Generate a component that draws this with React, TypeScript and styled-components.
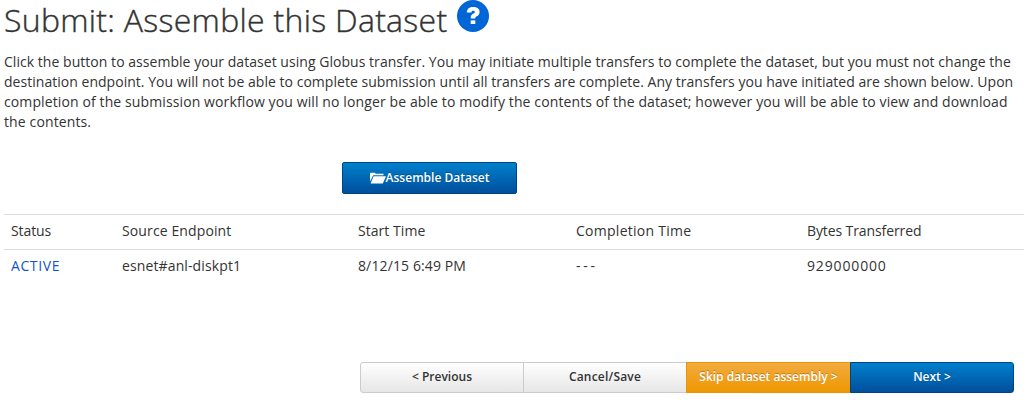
import React from 'react';
import styled, { createGlobalStyle, css } from 'styled-components';

const Global = createGlobalStyle`
  body {
    margin: 0;
    background: #fff;
    color: #333;
    font-family: "Open Sans", "Noto Sans", sans-serif;
    font-size: 14px;
    line-height: 20px;
  }
`;

const Page = styled.main`
  box-sizing: border-box;
  width: 1024px;
  height: 410px;
  padding-left: 4px;
  overflow: hidden;
`;

const Header = styled.header`
  display: flex;
  height: 52px;
`;

const Title = styled.h1`
  margin: 0;
  width: 453px;
  font-size: 32px;
  font-weight: 300;
  line-height: 40px;
  letter-spacing: 0.29px;
  -webkit-text-stroke: 0.4px #333;
  white-space: nowrap;
`;

const HelpIcon = styled.svg`
  width: 32px;
  height: 32px;
`;

const Intro = styled.p`
  margin: 0;
  white-space: nowrap;
`;

const Line = styled.span<{ $spacing: number }>`
  display: block;
  letter-spacing: ${(p) => p.$spacing}px;
`;

const Action = styled.div`
  display: flex;
  padding: 30px 0 20px 338px;
`;

const Button = styled.button<{ $kind: 'primary' | 'warning' | 'plain'; $spacing?: number }>`
  box-sizing: border-box;
  display: flex;
  align-items: center;
  justify-content: center;
  width: 164px;
  height: 31px;
  margin: 0;
  padding: 0 0 1px;
  border: 1px solid #ccc;
  font: 600 12px/20px "Open Sans", "Noto Sans", sans-serif;
  letter-spacing: ${(p) => p.$spacing ?? 0}px;
  white-space: nowrap;
  ${(p) =>
    p.$kind === 'primary' &&
    css`
      color: #fff;
      border-color: #004480;
      background: linear-gradient(#0080cc, #004f9c);
      text-shadow: 0 -1px 0 rgba(0, 0, 0, 0.25);
    `}
  ${(p) =>
    p.$kind === 'warning' &&
    css`
      color: #fff;
      border-color: #eb9500;
      background: linear-gradient(#f3ab41, #ee9700);
      text-shadow: 0 -1px 0 rgba(0, 0, 0, 0.25);
    `}
  ${(p) =>
    p.$kind === 'plain' &&
    css`
      color: #333;
      background: linear-gradient(#fff, #e6e6e6);
    `}
`;

const AssembleButton = styled(Button)`
  width: 175px;
  height: 32px;
  border-radius: 2px;
`;

const FolderIcon = styled.svg`
  width: 16px;
  height: 14px;
`;

const Table = styled.table`
  width: 1020px;
  border-collapse: collapse;
  table-layout: fixed;
`;

const Cell = styled.td<{ $width?: number; $spacing?: number }>`
  box-sizing: border-box;
  width: ${(p) => (p.$width ? `${p.$width}px` : 'auto')};
  height: 35px;
  padding: 0 0 2px 7px;
  border-top: 1px solid #ddd;
  letter-spacing: ${(p) => p.$spacing ?? 0}px;
  vertical-align: middle;
  white-space: nowrap;
`;

const Status = styled.a`
  color: #1155cc;
`;

const Steps = styled.nav`
  display: flex;
  margin: 77px 0 0 356px;

  ${Button} + ${Button} {
    margin-left: -1px;
  }
  ${Button}:first-child {
    border-radius: 3px 0 0 3px;
  }
  ${Button}:nth-child(3) {
    width: 165px;
  }
  ${Button}:last-child {
    border-radius: 0 3px 3px 0;
  }
`;

const columns = [
  { label: 'Status', width: 111, spacing: -0.1 },
  { label: 'Source Endpoint', width: 236, spacing: 0.12 },
  { label: 'Start Time', width: 218, spacing: 0.05 },
  { label: 'Completion Time', width: 231, spacing: 0.27 },
  { label: 'Bytes Transferred', width: 224, spacing: -0.1 },
];

export default function App() {
  return (
    <Page>
      <Global />
      <Header>
        <Title>Submit: Assemble this Dataset</Title>
        <HelpIcon viewBox="0 0 32 32" aria-label="Help">
          <circle cx="16" cy="16" r="16" fill="#0066d6" />
          <path
            d="M9.8 12.4C10 8.8 12.6 7 16.2 7c3.8 0 6.4 1.8 6.4 4.9 0 2.3-1.3 3.5-2.9 4.4-1.2.7-1.4 1.1-1.4 2.2h-4.6c0-2.8.8-3.8 2.7-4.9 1-.6 1.4-1 1.4-1.7 0-.8-.5-1.2-1.5-1.2-1.2 0-1.8.6-1.9 1.7z"
            fill="#fff"
          />
          <path d="M13.7 20.4h4.6V24h-4.6z" fill="#fff" />
        </HelpIcon>
      </Header>
      <Intro>
        <Line $spacing={0.04}>
          Click the button to assemble your dataset using Globus transfer. You may initiate multiple transfers to
          complete the dataset, but you must not change the
        </Line>
        <Line $spacing={0.03}>
          destination endpoint. You will not be able to complete submission until all transfers are complete. Any
          transfers you have initiated are shown below. Upon
        </Line>
        <Line $spacing={0.111}>
          completion of the submission workflow you will no longer be able to modify the contents of the dataset;
          however you will be able to view and download
        </Line>
        <Line $spacing={0.12}>the contents.</Line>
      </Intro>
      <Action>
        <AssembleButton $kind="primary">
          <FolderIcon viewBox="0 0 16 14">
            <path d="M0 10.5V2.6l.8-.9h4l.9 1.1h7.8v1.5H3.2z" fill="#fff" />
            <path d="M3.6 5.2H16L12.8 12.5H.6z" fill="#fff" />
          </FolderIcon>
          Assemble Dataset
        </AssembleButton>
      </Action>
      <Table>
        <tbody>
          <tr>
            {columns.map((c) => (
              <Cell key={c.label} $width={c.width} $spacing={c.spacing}>
                {c.label}
              </Cell>
            ))}
          </tr>
          <tr>
            <Cell $spacing={0.6}>
              <Status>ACTIVE</Status>
            </Cell>
            <Cell $spacing={0.12}>esnet#anl-diskpt1</Cell>
            <Cell $spacing={0.12}>8/12/15 6:49 PM</Cell>
            <Cell $spacing={2.8}>---</Cell>
            <Cell $spacing={0.85}>929000000</Cell>
          </tr>
        </tbody>
      </Table>
      <Steps>
        <Button $kind="plain">&lt; Previous</Button>
        <Button $kind="plain" $spacing={0.2}>Cancel/Save</Button>
        <Button $kind="warning">Skip dataset assembly &gt;</Button>
        <Button $kind="primary">Next &gt;</Button>
      </Steps>
    </Page>
  );
}
